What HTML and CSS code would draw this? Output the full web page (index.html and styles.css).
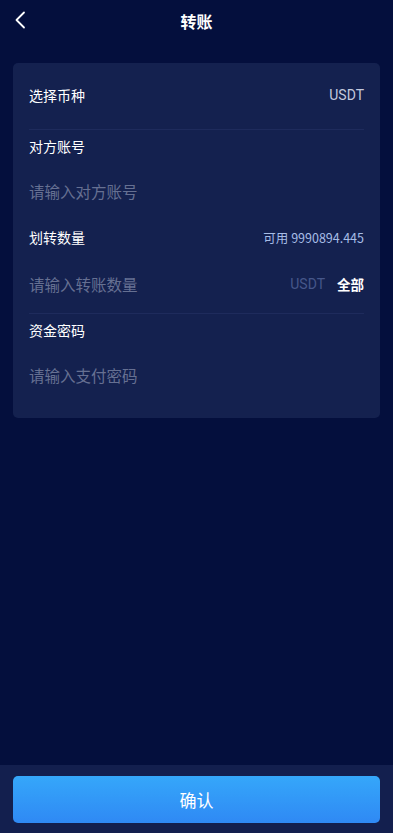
FILE: index.html
```html
<!DOCTYPE html>
<html lang="zh">
<head>
<meta charset="utf-8">
<meta name="viewport" content="width=device-width, initial-scale=1">
<title>转账</title>
<link rel="stylesheet" href="styles.css">
</head>
<body>
<div class="page">
  <header class="header">
    <button class="back" aria-label="返回">
      <svg width="12" height="18" viewBox="0 0 12 18"><path d="M10 1.5 L2.5 9 L10 16.5" fill="none" stroke="#fff" stroke-width="1.8" stroke-linecap="round" stroke-linejoin="round"/></svg>
    </button>
    <h1 class="title">转账</h1>
  </header>

  <main class="main">
    <section class="card">
      <div class="row row-select">
        <span class="label">选择币种</span>
        <span class="coin">USDT</span>
      </div>

      <div class="row row-label">
        <span class="label">对方账号</span>
      </div>
      <div class="row row-input">
        <span class="placeholder">请输入对方账号</span>
      </div>

      <div class="row row-label">
        <span class="label">划转数量</span>
        <span class="avail">可用 9990894.445</span>
      </div>
      <div class="row row-input bordered">
        <span class="placeholder">请输入转账数量</span>
        <span class="unit-group"><span class="unit">USDT</span><span class="all">全部</span></span>
      </div>

      <div class="row row-label">
        <span class="label">资金密码</span>
      </div>
      <div class="row row-input last">
        <span class="placeholder">请输入支付密码</span>
      </div>
    </section>
  </main>

  <footer class="footer">
    <button class="confirm">确认</button>
  </footer>
</div>
</body>
</html>
```

FILE: styles.css
```css
* { box-sizing: border-box; }
html, body { margin: 0; padding: 0; }
body {
  background: #040f3d;
  font-family: "Noto Sans CJK SC", Roboto, "Noto Sans", sans-serif;
  color: #fff;
}
.page {
  min-height: 833px;
  display: flex;
  flex-direction: column;
}
.header {
  height: 42px;
  display: flex;
  align-items: center;
  justify-content: center;
  position: relative;
}
.back {
  position: absolute;
  left: 10px;
  top: 10px;
  width: 20px;
  height: 20px;
  padding: 0;
  border: 0;
  background: none;
  display: flex;
  align-items: center;
  justify-content: center;
}
.title {
  margin: 0;
  font-size: 16px;
  font-weight: 700;
  line-height: 20px;
}
.main {
  flex: 1;
  padding: 21px 13px 0;
}
.card {
  background: #14214f;
  border-radius: 5px;
  padding: 0 16px 14px;
}
.row {
  display: flex;
  align-items: center;
  justify-content: space-between;
}
.row-select {
  height: 67px;
  padding-bottom: 3px;
  border-bottom: 1px solid #1e2b5c;
}
.row-label { height: 31px; }
.row-input { height: 60px; }
.row-label + .row-input + .row-label { height: 32px; }
.row-input.bordered { height: 61px; padding-top: 1px; border-bottom: 1px solid #1e2b5c; }
.row-input.bordered + .row-label { height: 32px; }
.row-input.last { height: 58px; }
.label {
  font-size: 14px;
  font-weight: 400;
  color: #fff;
}
.coin {
  font-family: Roboto, "Noto Sans CJK SC", sans-serif;
  font-size: 14px;
  color: #c3c9de;
}
.placeholder {
  font-size: 15.5px;
  color: #667092;
}
.avail {
  font-size: 12.5px;
  color: #a7bde6;
}
.unit-group {
  display: flex;
  align-items: center;
  gap: 12px;
}
.unit {
  font-family: Roboto, "Noto Sans CJK SC", sans-serif;
  font-size: 14px;
  color: #46578a;
}
.all {
  font-size: 13.5px;
  font-weight: 700;
  color: #fff;
}
.footer {
  background: #131f4e;
  padding: 11px 13px 10px;
}
.confirm {
  display: block;
  width: 100%;
  height: 47px;
  border: 0;
  border-radius: 5px;
  background: linear-gradient(180deg, #35a7fa 0%, #2f89f4 100%);
  color: #fff;
  font-family: "Noto Sans CJK SC", sans-serif;
  font-size: 17px;
  font-weight: 400;
}
```
